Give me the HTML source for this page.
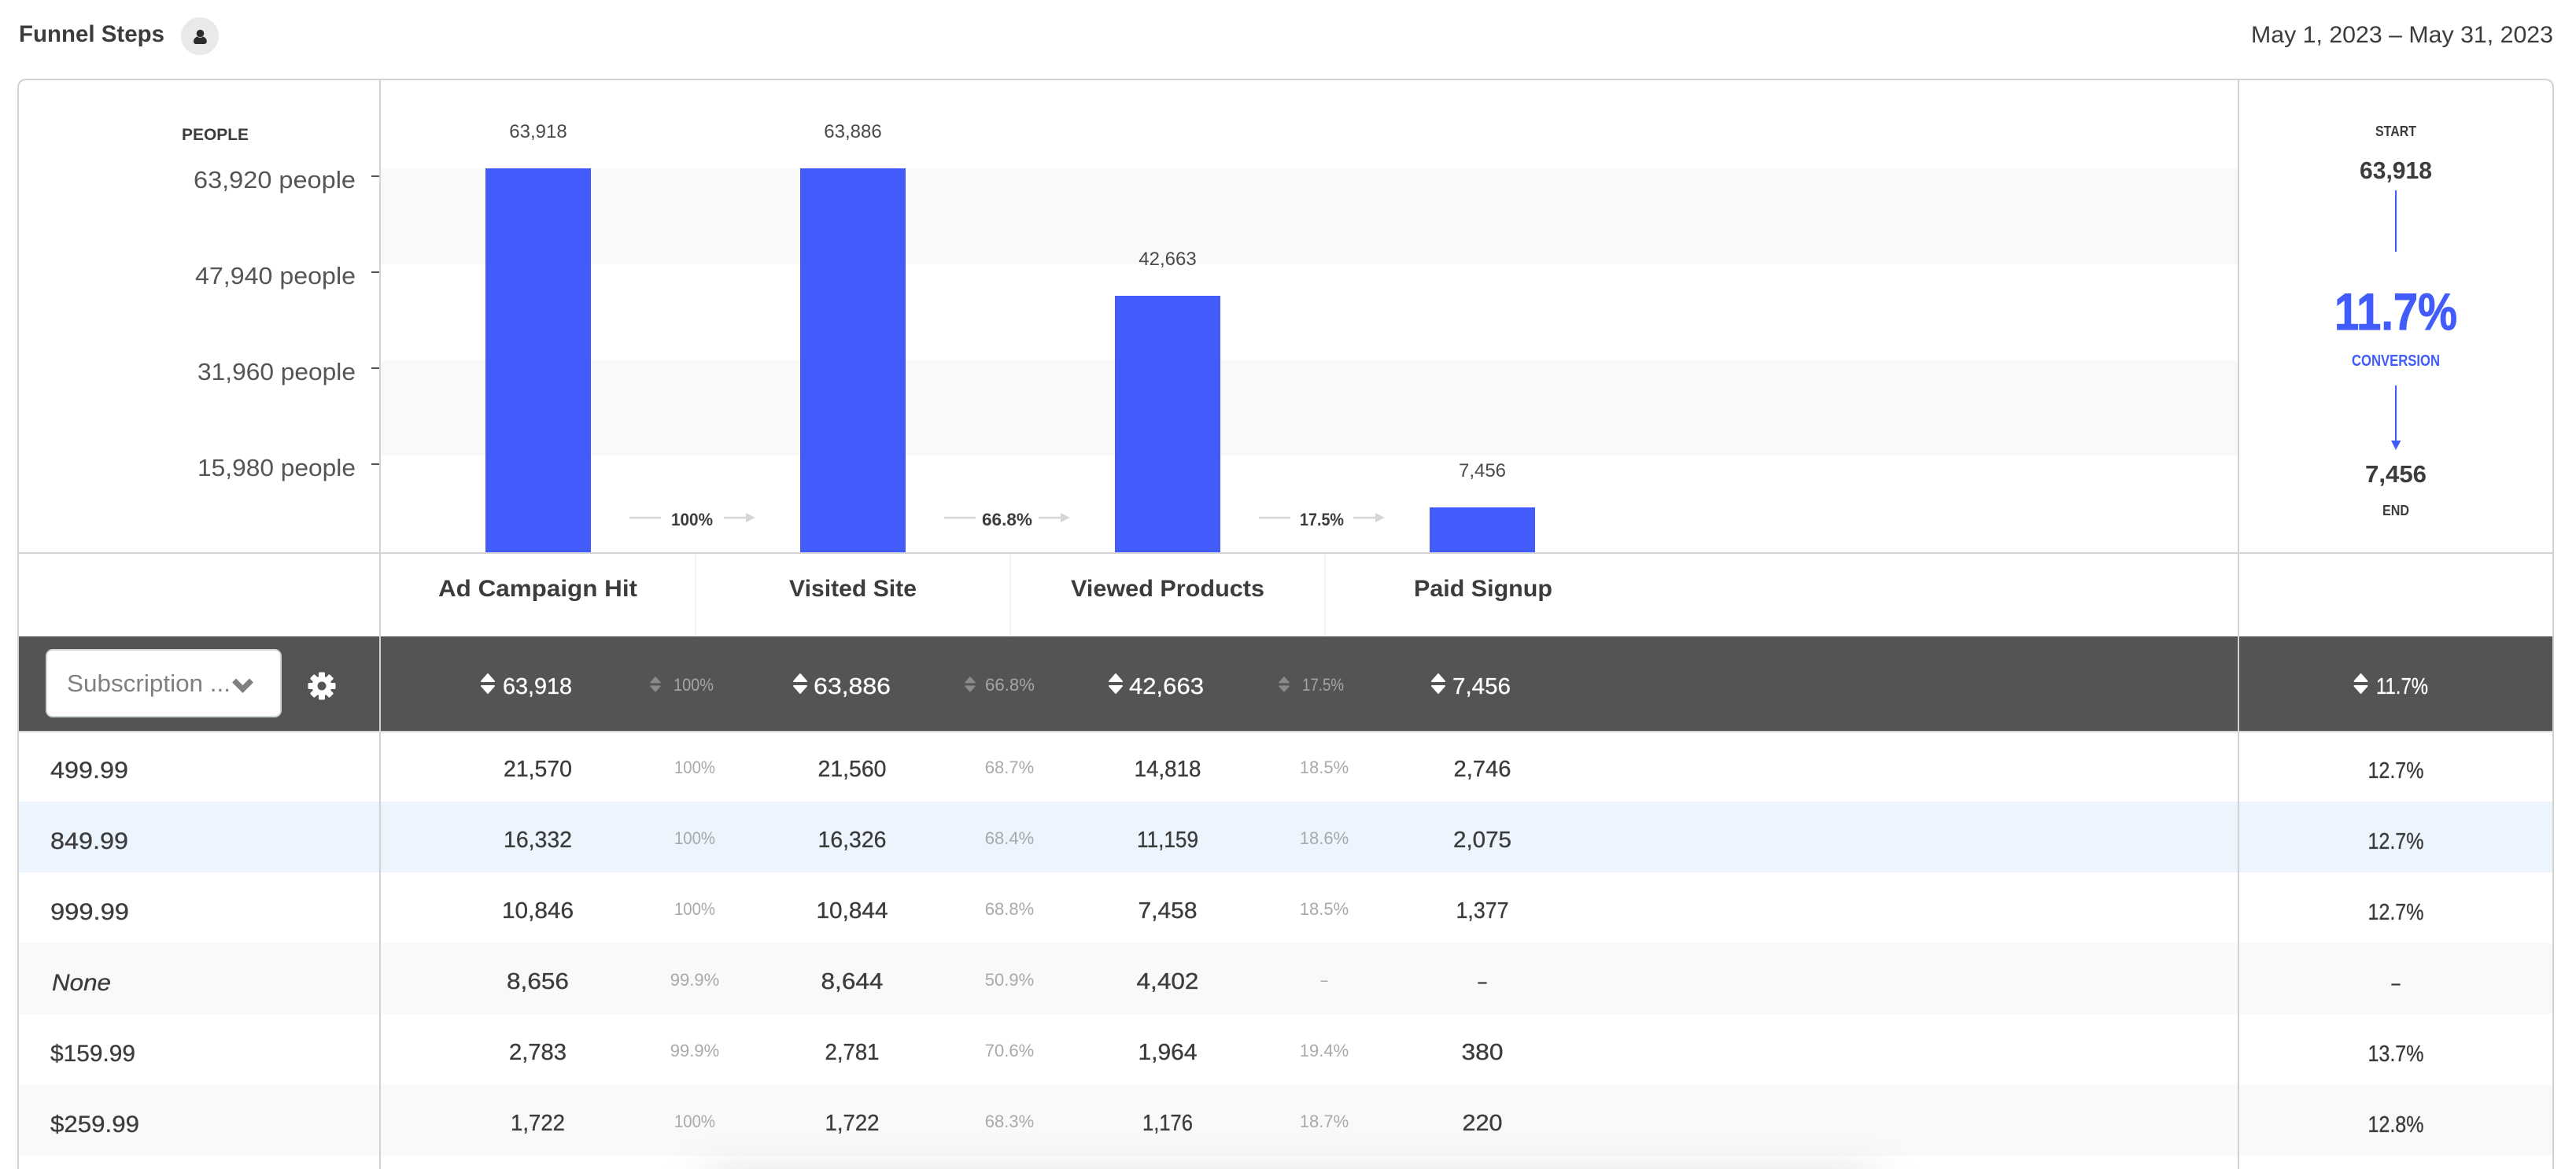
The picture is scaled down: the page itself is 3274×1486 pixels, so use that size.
<!DOCTYPE html>
<html><head><meta charset="utf-8"><title>Funnel Steps</title>
<style>
html,body{margin:0;padding:0;background:#fff;width:3274px;height:1486px;overflow:hidden}
svg{display:block;position:absolute;left:0;top:0}
text{font-family:"Liberation Sans",sans-serif;fill:#3c3c3c}
.b{font-weight:bold}
.n{font-size:29px;text-anchor:middle;stroke:#3c3c3c;stroke-width:.35}
.p{font-size:22px;text-anchor:middle;fill:#a9a9a9}
.l{font-size:30px;stroke:#3c3c3c;stroke-width:.3}
.c{font-size:29px;text-anchor:middle;stroke:#3c3c3c;stroke-width:.35}
.y{font-size:31px;fill:#555}
.v{font-size:24px;text-anchor:middle;fill:#4a4a4a}
.h{font-size:30px;font-weight:bold}
.w{font-size:29px;fill:#fff;stroke:#fff;stroke-width:.3}
.d{font-size:22px;fill:#a5a5a5}
.a{font-size:22px;font-weight:bold}
</style></head><body>
<svg width="3274" height="1486" viewBox="0 0 3274 1486" xmlns="http://www.w3.org/2000/svg">
<defs>
<g id="s"><path d="M-8,-2.5L0,-11.5L8,-2.5Z" stroke-width="2" stroke-linejoin="round"/><path d="M-8,3.5L0,12.5L8,3.5Z" stroke-width="2" stroke-linejoin="round"/></g>
<g id="ar"><rect x="120" y="-1.2" width="30" height="2.6" fill="#d6d6d6"/><path d="M148,-6L160,0L148,6Z" fill="#d6d6d6"/><rect x="0" y="-1.2" width="40" height="2.6" fill="#d6d6d6"/></g>
<linearGradient id="sg" x1="0" y1="0" x2="0" y2="1">
<stop offset="0" stop-color="#000" stop-opacity="0"/>
<stop offset=".5" stop-color="#000" stop-opacity=".015"/>
<stop offset="1" stop-color="#000" stop-opacity=".055"/>
</linearGradient>
<filter id="sf" x="-10%" y="0" width="120%" height="100%"><feGaussianBlur stdDeviation="32 0"/></filter>
</defs>

<!-- header -->
<text x="24" y="53" class="b" font-size="30" textLength="185" lengthAdjust="spacingAndGlyphs">Funnel Steps</text>
<circle cx="254" cy="46" r="24" fill="#e9e9e9"/>
<circle cx="254.5" cy="42.5" r="4.8" fill="#2b2b2b"/>
<path d="M246,52.5C246,49 249,47 251,46.5C253,48.4 256,48.4 258,46.5C260,47 262.8,49 262.8,52.5C262.8,55 261,56 259,56L249.5,56C247.5,56 246,55 246,52.5Z" fill="#2b2b2b"/>
<text x="2861" y="54" font-size="30" textLength="384" lengthAdjust="spacingAndGlyphs">May 1, 2023 – May 31, 2023</text>

<!-- row backgrounds -->
<rect x="24" y="1019" width="3220" height="90" fill="#ecf4fd"/>
<rect x="24" y="1199" width="3220" height="90" fill="#f9f9f9"/>
<rect x="24" y="1379" width="3220" height="90" fill="#f9f9f9"/>

<!-- chart bands -->
<rect x="484" y="214" width="2360" height="122" fill="#f9f9f9"/>
<rect x="484" y="458" width="2360" height="121" fill="#f9f9f9"/>

<!-- header dividers -->
<rect x="883" y="704" width="2" height="105" fill="#f5f5f5"/>
<rect x="1283" y="704" width="2" height="105" fill="#f5f5f5"/>
<rect x="1683" y="704" width="2" height="105" fill="#f5f5f5"/>

<!-- dark band -->
<rect x="24" y="809" width="3220" height="120" fill="#545454"/>
<rect x="24" y="929" width="3220" height="2" fill="#d4d4d4"/>

<!-- frame -->
<path d="M23,1486V112Q23,101 34,101H3234Q3245,101 3245,112V1486" fill="none" stroke="#d2d2d2" stroke-width="2"/>
<rect x="482" y="102" width="2" height="1384" fill="#d2d2d2"/>
<rect x="2844" y="102" width="2" height="1384" fill="#d2d2d2"/>
<rect x="24" y="702" width="3220" height="2" fill="#d4d4d4"/>

<!-- y axis -->
<text x="231" y="178" class="b" font-size="21" textLength="85" lengthAdjust="spacingAndGlyphs">PEOPLE</text>
<text x="246" y="239" class="y" textLength="206" lengthAdjust="spacingAndGlyphs">63,920 people</text>
<text x="248" y="361" class="y" textLength="204" lengthAdjust="spacingAndGlyphs">47,940 people</text>
<text x="251" y="483" class="y" textLength="201" lengthAdjust="spacingAndGlyphs">31,960 people</text>
<text x="251" y="605" class="y" textLength="201" lengthAdjust="spacingAndGlyphs">15,980 people</text>
<rect x="472" y="223" width="10" height="2" fill="#555"/>
<rect x="472" y="345" width="10" height="2" fill="#555"/>
<rect x="472" y="467" width="10" height="2" fill="#555"/>
<rect x="472" y="589" width="10" height="2" fill="#555"/>

<!-- bars -->
<rect x="617" y="214" width="134" height="488" fill="#415cfa"/>
<rect x="1017" y="214" width="134" height="488" fill="#415cfa"/>
<rect x="1417" y="376" width="134" height="326" fill="#415cfa"/>
<rect x="1817" y="645" width="134" height="57" fill="#415cfa"/>
<text x="684" y="175" class="v">63,918</text>
<text x="1084" y="175" class="v">63,886</text>
<text x="1484" y="337" class="v">42,663</text>
<text x="1884" y="606" class="v">7,456</text>

<!-- step arrows -->
<use href="#ar" transform="translate(800,658)"/>
<use href="#ar" transform="translate(1200,658)"/>
<use href="#ar" transform="translate(1600,658)"/>
<text x="853" y="668" class="a" textLength="53" lengthAdjust="spacingAndGlyphs">100%</text>
<text x="1248" y="668" class="a" textLength="64" lengthAdjust="spacingAndGlyphs">66.8%</text>
<text x="1652" y="668" class="a" textLength="56" lengthAdjust="spacingAndGlyphs">17.5%</text>

<!-- step labels -->
<text x="557" y="758" class="h" textLength="253" lengthAdjust="spacingAndGlyphs">Ad Campaign Hit</text>
<text x="1003" y="758" class="h" textLength="162" lengthAdjust="spacingAndGlyphs">Visited Site</text>
<text x="1361" y="758" class="h" textLength="246" lengthAdjust="spacingAndGlyphs">Viewed Products</text>
<text x="1797" y="758" class="h" textLength="176" lengthAdjust="spacingAndGlyphs">Paid Signup</text>

<!-- select -->
<rect x="59" y="826" width="298" height="85" rx="8" fill="#fff" stroke="#cfd6da" stroke-width="2"/>
<text x="85" y="879" font-size="31" style="fill:#808080" textLength="208" lengthAdjust="spacingAndGlyphs">Subscription ...</text>
<path d="M297.5,865L308.5,876L319.5,865" fill="none" stroke="#808080" stroke-width="7"/>
<!-- gear -->
<g transform="translate(409,872)" fill="#fff">
<circle r="12.5"/>
<rect x="-4" y="-17.5" width="8" height="35" rx="1.5"/>
<rect x="-4" y="-17.5" width="8" height="35" rx="1.5" transform="rotate(45)"/>
<rect x="-4" y="-17.5" width="8" height="35" rx="1.5" transform="rotate(90)"/>
<rect x="-4" y="-17.5" width="8" height="35" rx="1.5" transform="rotate(135)"/>
<circle r="5.5" fill="#545454"/>
</g>

<!-- dark band values -->
<use href="#s" x="620" y="868.5" fill="#fff" stroke="#fff"/>
<use href="#s" x="1017" y="868.5" fill="#fff" stroke="#fff"/>
<use href="#s" x="1418" y="868.5" fill="#fff" stroke="#fff"/>
<use href="#s" x="1828" y="868.5" fill="#fff" stroke="#fff"/>
<use href="#s" x="3000.5" y="868.5" fill="#fff" stroke="#fff"/>
<text x="639" y="882" class="w" textLength="88" lengthAdjust="spacingAndGlyphs">63,918</text>
<text x="1034" y="882" class="w" textLength="98" lengthAdjust="spacingAndGlyphs">63,886</text>
<text x="1435" y="882" class="w" textLength="95" lengthAdjust="spacingAndGlyphs">42,663</text>
<text x="1846" y="882" class="w" textLength="74" lengthAdjust="spacingAndGlyphs">7,456</text>
<text x="3020" y="882" class="w" textLength="66" lengthAdjust="spacingAndGlyphs">11.7%</text>
<g fill="#8b8b8b" stroke="#8b8b8b">
<use href="#s" transform="translate(833,869.5) scale(.75)"/>
<use href="#s" transform="translate(1233,869.5) scale(.75)"/>
<use href="#s" transform="translate(1632,869.5) scale(.75)"/>
</g>
<text x="856" y="878" class="d" textLength="51" lengthAdjust="spacingAndGlyphs">100%</text>
<text x="1252" y="878" class="d" textLength="63" lengthAdjust="spacingAndGlyphs">66.8%</text>
<text x="1655" y="878" class="d" textLength="53" lengthAdjust="spacingAndGlyphs">17.5%</text>

<!-- right panel -->
<text x="3045" y="173" class="b" font-size="18" text-anchor="middle" textLength="52" lengthAdjust="spacingAndGlyphs">START</text>
<text x="3045" y="227" class="b" font-size="31" text-anchor="middle" textLength="92" lengthAdjust="spacingAndGlyphs">63,918</text>
<rect x="3044" y="242" width="2" height="78" fill="#415cfa"/>
<text x="3045" y="419" class="b" font-size="66" text-anchor="middle" style="fill:#415cfa;stroke:#415cfa;stroke-width:1" textLength="156" lengthAdjust="spacingAndGlyphs">11.7%</text>
<text x="3045" y="465" class="b" font-size="20" text-anchor="middle" style="fill:#415cfa" textLength="112" lengthAdjust="spacingAndGlyphs">CONVERSION</text>
<rect x="3044" y="490" width="2" height="72" fill="#415cfa"/>
<path d="M3039,560H3051.5L3045,572Z" fill="#415cfa"/>
<text x="3045" y="613" class="b" font-size="31" text-anchor="middle" textLength="78" lengthAdjust="spacingAndGlyphs">7,456</text>
<text x="3045" y="655" class="b" font-size="18" text-anchor="middle" textLength="34" lengthAdjust="spacingAndGlyphs">END</text>

<!-- row 1 -->
<text x="64" y="989" class="l" textLength="99" lengthAdjust="spacingAndGlyphs">499.99</text>
<text x="683.5" y="987" class="n" textLength="87" lengthAdjust="spacingAndGlyphs">21,570</text><text x="883" y="983" class="p" textLength="52" lengthAdjust="spacingAndGlyphs">100%</text>
<text x="1083" y="987" class="n" textLength="87" lengthAdjust="spacingAndGlyphs">21,560</text><text x="1283" y="983" class="p">68.7%</text>
<text x="1484" y="987" class="n" textLength="85" lengthAdjust="spacingAndGlyphs">14,818</text><text x="1683" y="983" class="p">18.5%</text>
<text x="1884" y="987" class="n" textLength="73" lengthAdjust="spacingAndGlyphs">2,746</text><text x="3045" y="989" class="c" textLength="71" lengthAdjust="spacingAndGlyphs">12.7%</text>
<!-- row 2 -->
<text x="64" y="1079" class="l" textLength="99" lengthAdjust="spacingAndGlyphs">849.99</text>
<text x="683.5" y="1077" class="n" textLength="87" lengthAdjust="spacingAndGlyphs">16,332</text><text x="883" y="1073" class="p" textLength="52" lengthAdjust="spacingAndGlyphs">100%</text>
<text x="1083" y="1077" class="n" textLength="87" lengthAdjust="spacingAndGlyphs">16,326</text><text x="1283" y="1073" class="p">68.4%</text>
<text x="1484" y="1077" class="n" textLength="78" lengthAdjust="spacingAndGlyphs">11,159</text><text x="1683" y="1073" class="p">18.6%</text>
<text x="1884" y="1077" class="n" textLength="74" lengthAdjust="spacingAndGlyphs">2,075</text><text x="3045" y="1079" class="c" textLength="71" lengthAdjust="spacingAndGlyphs">12.7%</text>
<!-- row 3 -->
<text x="64" y="1169" class="l" textLength="100" lengthAdjust="spacingAndGlyphs">999.99</text>
<text x="683.5" y="1167" class="n" textLength="91" lengthAdjust="spacingAndGlyphs">10,846</text><text x="883" y="1163" class="p" textLength="52" lengthAdjust="spacingAndGlyphs">100%</text>
<text x="1083" y="1167" class="n" textLength="91" lengthAdjust="spacingAndGlyphs">10,844</text><text x="1283" y="1163" class="p">68.8%</text>
<text x="1484" y="1167" class="n" textLength="75" lengthAdjust="spacingAndGlyphs">7,458</text><text x="1683" y="1163" class="p">18.5%</text>
<text x="1884" y="1167" class="n" textLength="67" lengthAdjust="spacingAndGlyphs">1,377</text><text x="3045" y="1169" class="c" textLength="71" lengthAdjust="spacingAndGlyphs">12.7%</text>
<!-- row 4 -->
<text x="66" y="1259" class="l" font-style="italic" textLength="75" lengthAdjust="spacingAndGlyphs">None</text>
<text x="683.5" y="1257" class="n" textLength="79" lengthAdjust="spacingAndGlyphs">8,656</text><text x="883" y="1253" class="p">99.9%</text>
<text x="1083" y="1257" class="n" textLength="79" lengthAdjust="spacingAndGlyphs">8,644</text><text x="1283" y="1253" class="p">50.9%</text>
<text x="1484" y="1257" class="n" textLength="79" lengthAdjust="spacingAndGlyphs">4,402</text><text x="1683" y="1253" class="p" textLength="9" lengthAdjust="spacingAndGlyphs">–</text>
<text x="1884" y="1257" class="n" textLength="11" lengthAdjust="spacingAndGlyphs">–</text><text x="3045" y="1259" class="c" textLength="11" lengthAdjust="spacingAndGlyphs">–</text>
<!-- row 5 -->
<text x="64" y="1349" class="l" textLength="108" lengthAdjust="spacingAndGlyphs">$159.99</text>
<text x="683.5" y="1347" class="n" textLength="73" lengthAdjust="spacingAndGlyphs">2,783</text><text x="883" y="1343" class="p">99.9%</text>
<text x="1083" y="1347" class="n" textLength="69" lengthAdjust="spacingAndGlyphs">2,781</text><text x="1283" y="1343" class="p">70.6%</text>
<text x="1484" y="1347" class="n" textLength="75" lengthAdjust="spacingAndGlyphs">1,964</text><text x="1683" y="1343" class="p">19.4%</text>
<text x="1884" y="1347" class="n" textLength="53" lengthAdjust="spacingAndGlyphs">380</text><text x="3045" y="1349" class="c" textLength="71" lengthAdjust="spacingAndGlyphs">13.7%</text>
<!-- row 6 -->
<text x="64" y="1439" class="l" textLength="113" lengthAdjust="spacingAndGlyphs">$259.99</text>
<text x="683.5" y="1437" class="n" textLength="69" lengthAdjust="spacingAndGlyphs">1,722</text><text x="883" y="1433" class="p" textLength="52" lengthAdjust="spacingAndGlyphs">100%</text>
<text x="1083" y="1437" class="n" textLength="69" lengthAdjust="spacingAndGlyphs">1,722</text><text x="1283" y="1433" class="p">68.3%</text>
<text x="1484" y="1437" class="n" textLength="64" lengthAdjust="spacingAndGlyphs">1,176</text><text x="1683" y="1433" class="p">18.7%</text>
<text x="1884" y="1437" class="n" textLength="51" lengthAdjust="spacingAndGlyphs">220</text><text x="3045" y="1439" class="c" textLength="71" lengthAdjust="spacingAndGlyphs">12.8%</text>

<!-- faint bottom shadow -->
<rect x="900" y="1440" width="1480" height="46" fill="url(#sg)" filter="url(#sf)"/>
</svg>
</body></html>
